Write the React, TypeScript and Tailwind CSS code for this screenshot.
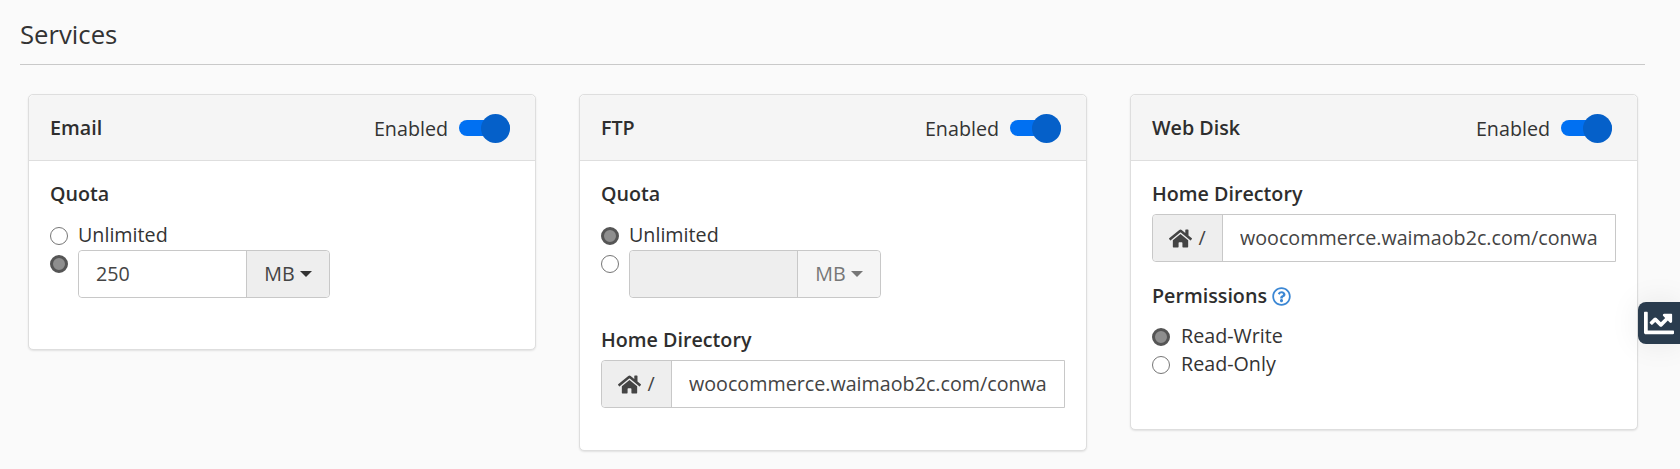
import { FaChartLine, FaHome, FaRegQuestionCircle } from 'react-icons/fa'

function Radio({ checked, className = '' }: { checked?: boolean; className?: string }) {
  if (checked) {
    return <span className={`block w-[18px] h-[18px] shrink-0 rounded-full bg-[#8e8e8e] border-[3px] border-[#555] blur-[0.4px] ${className}`} />
  }
  return <span className={`block w-[18px] h-[18px] shrink-0 rounded-full bg-white border border-[#767676] ${className}`} />
}

function Toggle() {
  return (
    <span className="flex items-center w-[51px] h-[29px]">
      <span className="flex justify-end items-center w-[51px] h-[16px] rounded-full bg-[#0070f2]">
        <span className="block w-[29px] h-[29px] rounded-full bg-[#0560c9]" />
      </span>
    </span>
  )
}

function Card({ title, children }: { title: string; children: React.ReactNode }) {
  return (
    <div className="w-[508px] shrink-0 bg-white border border-[#dedede] rounded-[5px] shadow-[0_1px_2px_rgba(0,0,0,0.1)]">
      <div className="h-[66px] flex items-center justify-between pl-[21px] pr-[25px] bg-[#f5f5f5] border-b border-[#dedede] rounded-t-[5px]">
        <span className="text-[19.7px] font-semibold text-[#2e2e2e]">{title}</span>
        <span className="flex items-center gap-[11px] pt-[2px] text-[19.7px] text-[#333]">
          Enabled
          <Toggle />
        </span>
      </div>
      {children}
    </div>
  )
}

function Label({ children }: { children: React.ReactNode }) {
  return <div className="text-[19.7px] leading-[24px] font-semibold text-[#2e2e2e]">{children}</div>
}

function Quota({ enabled }: { enabled: boolean }) {
  return (
    <>
      <Label>Quota</Label>
      <div className="mt-[14px] flex items-center gap-[10px] h-[30px] text-[19.7px] text-[#333]">
        <Radio checked={!enabled} className="mt-[1px]" />
        Unlimited
      </div>
      <div className="flex gap-[10px]">
        <Radio checked={enabled} className="mt-[5px]" />
        {enabled ? (
          <div className="flex w-[252px] h-[48px] border border-[#c8c8c8] rounded-[4px] text-[19.7px] text-[#444]">
            <div className="w-[167px] flex items-center pl-[17px] bg-white rounded-l-[4px]">250</div>
            <div className="flex-1 flex items-center justify-center gap-[5px] bg-[#eeeeee] border-l border-[#c8c8c8] rounded-r-[4px]">
              MB
              <span className="w-0 h-0 border-x-[6px] border-x-transparent border-t-[6px] border-t-[#333]" />
            </div>
          </div>
        ) : (
          <div className="flex w-[252px] h-[48px] border border-[#c8c8c8] rounded-[4px] text-[19.7px] text-[#777]">
            <div className="w-[167px] bg-[#eeeeee] rounded-l-[4px]" />
            <div className="flex-1 flex items-center justify-center gap-[5px] bg-[#f5f5f5] border-l border-[#c8c8c8] rounded-r-[4px]">
              MB
              <span className="w-0 h-0 border-x-[6px] border-x-transparent border-t-[6px] border-t-[#777]" />
            </div>
          </div>
        )}
      </div>
    </>
  )
}

function HomeDirectory() {
  return (
    <>
      <Label>Home Directory</Label>
      <div className="mt-[8px] flex h-[48px] border border-[#c8c8c8] rounded-l-[4px] text-[19.7px] text-[#444]">
        <div className="w-[70px] shrink-0 flex items-center justify-center gap-[6px] bg-[#eeeeee] border-r border-[#c8c8c8] rounded-l-[4px]">
          <FaHome className="w-[23px] h-[21px] text-[#444]" />
          /
        </div>
        <div className="flex-1 min-w-0 flex items-center pl-[17px] pr-[17px] bg-white overflow-hidden whitespace-nowrap">
          <span className="block overflow-hidden">woocommerce.waimaob2c.com/conwa</span>
        </div>
      </div>
    </>
  )
}

function ReadOption({ label, checked }: { label: string; checked?: boolean }) {
  return (
    <div className="flex items-center gap-[11px] h-[28px] text-[19.7px] text-[#333]">
      <Radio checked={checked} className="mt-[1px]" />
      {label}
    </div>
  )
}

export default function App() {
  return (
    <div className="relative w-[1680px] h-[469px] overflow-hidden bg-[#fafafa] font-['Open_Sans',sans-serif]">
      <div className="px-5 pt-[18px]">
        <h2 className="text-[25.7px] leading-[34px] text-[#333] pb-[12px] w-[1625px] border-b border-[#c9c9c9]">Services</h2>
      </div>
      <div className="flex items-start gap-[43px] pl-[28px] mt-[29px]">
        <Card title="Email">
          <div className="px-[21px] pt-[21px] h-[188px]">
            <Quota enabled />
          </div>
        </Card>
        <Card title="FTP">
          <div className="px-[21px] pt-[21px] pb-[42px]">
            <Quota enabled={false} />
            <div className="mt-[30px]">
              <HomeDirectory />
            </div>
          </div>
        </Card>
        <Card title="Web Disk">
          <div className="px-[21px] pt-[21px] h-[268px]">
            <HomeDirectory />
            <div className="mt-[22px] flex items-center gap-[5px]">
              <Label>Permissions</Label>
              <FaRegQuestionCircle className="w-[19px] h-[19px] text-[#3b87d4]" />
            </div>
            <div className="mt-[14px]">
              <ReadOption label="Read-Write" checked />
              <ReadOption label="Read-Only" />
            </div>
          </div>
        </Card>
      </div>
      {/* stats tab stuck to the right edge */}
      <div className="absolute right-0 top-[302px] w-[42px] h-[42px] flex items-center pl-[6px] rounded-l-[8px] bg-[#2a3c4e] shadow-[0_0_30px_rgba(0,0,0,0.08)]">
        <FaChartLine className="w-[30px] h-[30px] text-white" />
      </div>
    </div>
  )
}
